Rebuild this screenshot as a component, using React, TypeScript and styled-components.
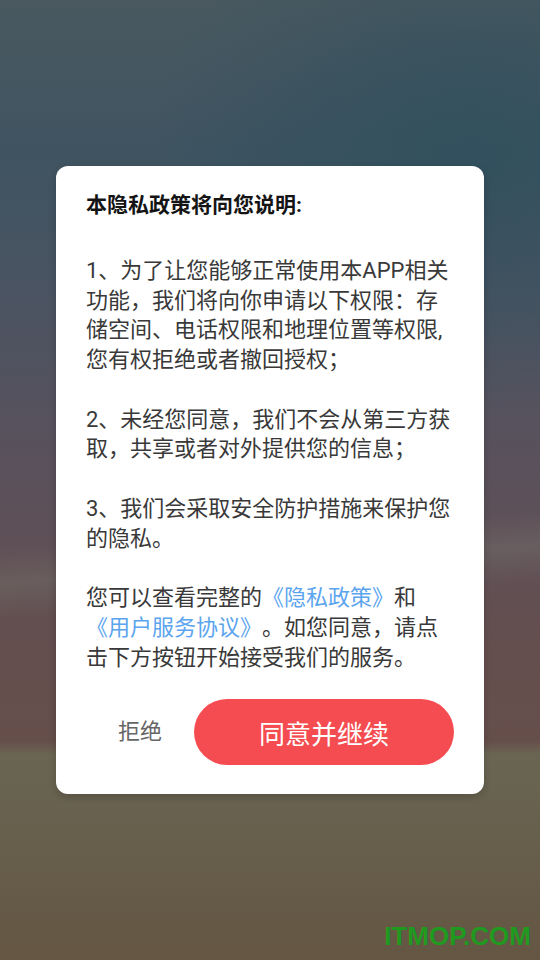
import styled, { createGlobalStyle } from "styled-components";

const GlobalStyle = createGlobalStyle`
  html, body {
    margin: 0;
    padding: 0;
  }
  body {
    font-family: Roboto, "Noto Sans CJK SC", sans-serif;
  }
`;

const Screen = styled.div`
  position: relative;
  width: 540px;
  height: 960px;
  overflow: hidden;
  display: flex;
  align-items: center;
  justify-content: center;
  background:
    linear-gradient(
      176deg,
      rgba(120, 120, 110, 0) 0%,
      rgba(120, 120, 110, 0) 55%,
      rgba(120, 120, 110, 0.35) 58.5%,
      rgba(120, 120, 110, 0) 62%,
      rgba(120, 120, 110, 0) 100%
    ),
    radial-gradient(ellipse 320px 260px at 470px 150px, rgba(44, 78, 92, 0.7), rgba(44, 78, 92, 0) 100%),
    linear-gradient(
      180deg,
      #4a5960 0%,
      #3f5461 16%,
      #4a5462 30%,
      #57525e 44%,
      #5f5058 56%,
      #654f4e 68%,
      #664f4b 77.2%,
      #6a6553 78.6%,
      #67604d 86%,
      #645643 100%
    );
`;

const Card = styled.div`
  width: 428px;
  box-sizing: border-box;
  padding: 24px 30px 29px;
  background: #ffffff;
  border-radius: 12px;
  box-shadow: 0 3px 8px rgba(0, 0, 0, 0.18);
`;

const Title = styled.h2`
  margin: 0 0 36px;
  font-size: 21px;
  line-height: 30px;
  font-weight: 700;
  color: #141414;
`;

const Paragraph = styled.p`
  margin: 0 0 29.75px;
  font-size: 22px;
  line-height: 29.75px;
  color: #393939;
  text-spacing-trim: space-all;

  &:last-of-type {
    margin-bottom: 0;
  }
`;

const Link = styled.span`
  color: #5ba4ee;
`;

const Actions = styled.div`
  display: flex;
  align-items: center;
  margin-top: 27px;
`;

const RefuseButton = styled.button`
  flex: 1;
  border: none;
  background: none;
  padding: 0;
  font-family: inherit;
  font-size: 22px;
  line-height: 30px;
  color: #666666;
  cursor: pointer;
`;

const AgreeButton = styled.button`
  width: 260px;
  height: 66px;
  border: none;
  border-radius: 33px;
  background: #f44c50;
  color: #ffffff;
  font-family: inherit;
  font-size: 26px;
  cursor: pointer;
`;

const Watermark = styled.div`
  position: absolute;
  right: 9px;
  bottom: 9px;
  font-family: "Liberation Sans", Arial, sans-serif;
  font-weight: 700;
  font-size: 26px;
  line-height: 30px;
  color: #1f9a1f;
`;

export default function App() {
  return (
    <>
      <GlobalStyle />
      <Screen>
        <Card>
          <Title>本隐私政策将向您说明:</Title>
          <Paragraph>
            1、为了让您能够正常使用本APP相关功能，我们将向你申请以下权限：存储空间、电话权限和地理位置等权限,
            <br />
            您有权拒绝或者撤回授权；
          </Paragraph>
          <Paragraph>
            2、未经您同意，我们不会从第三方获取，共享或者对外提供您的信息；
          </Paragraph>
          <Paragraph>3、我们会采取安全防护措施来保护您的隐私。</Paragraph>
          <Paragraph>
            您可以查看完整的<Link>《隐私政策》</Link>和<Link>《用户服务协议》</Link>。如您同意，请点击下方按钮开始接受我们的服务。
          </Paragraph>
          <Actions>
            <RefuseButton>拒绝</RefuseButton>
            <AgreeButton>同意并继续</AgreeButton>
          </Actions>
        </Card>
        <Watermark>ITMOP.COM</Watermark>
      </Screen>
    </>
  );
}
